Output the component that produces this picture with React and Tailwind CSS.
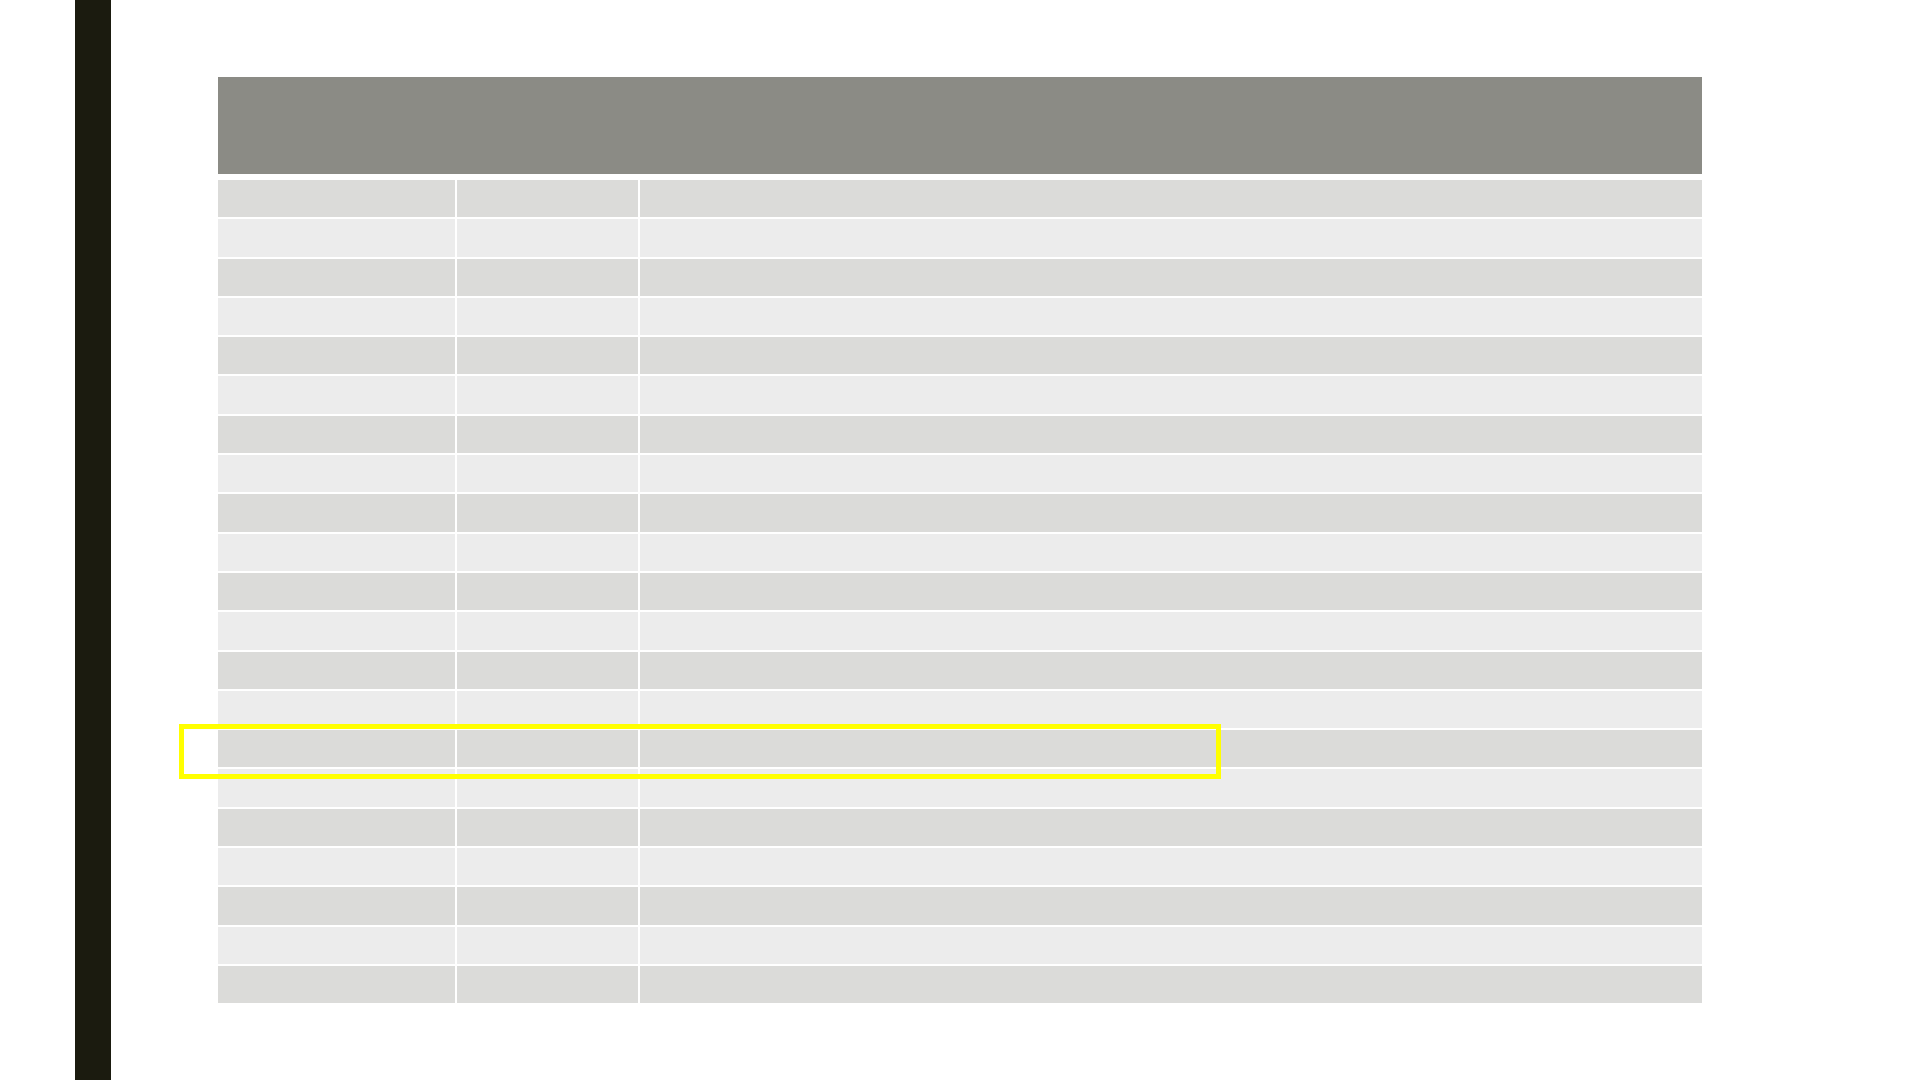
const rows = Array.from({ length: 21 }, (_, i) => i);

export default function App() {
  return (
    <div className="relative w-[1920px] h-[1080px] bg-white flex overflow-hidden">
      {/* left accent bar */}
      <div className="ml-[75px] w-[36px] h-full bg-[#1b1b0f]" />

      {/* table */}
      <div className="ml-[107px] mt-[77px] w-[1484px] flex flex-col">
        <div className="h-[97px] bg-[#8b8b85]" />
        <div className="mt-[6px] flex flex-col gap-[2px]">
          {rows.map((i) => (
            <div
              key={i}
              className="grid grid-cols-[237px_181px_1fr] gap-x-[2px] h-[37.3px]"
            >
              <div className={i % 2 === 0 ? "bg-[#dbdbd9]" : "bg-[#ececec]"} />
              <div className={i % 2 === 0 ? "bg-[#dbdbd9]" : "bg-[#ececec]"} />
              <div className={i % 2 === 0 ? "bg-[#dbdbd9]" : "bg-[#ececec]"} />
            </div>
          ))}
        </div>
      </div>

      {/* highlight box */}
      <div className="absolute left-[179px] top-[724px] w-[1042px] h-[55px] border-[5px] border-[#ffff00]" />
    </div>
  );
}
